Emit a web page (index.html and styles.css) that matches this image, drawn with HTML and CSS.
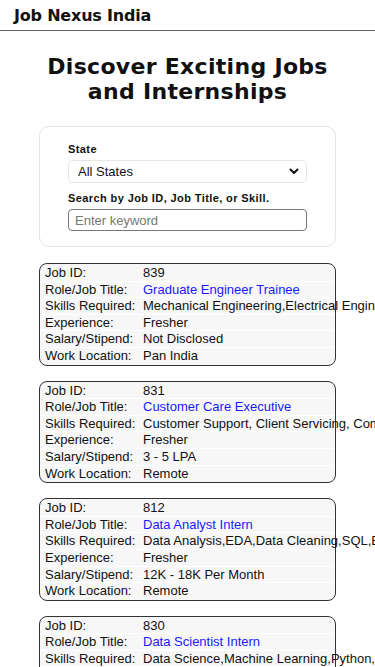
FILE: index.html
```html
<!DOCTYPE html>
<html lang="en">
<head>
  <meta charset="UTF-8" />
  <title>Job Nexus India</title>
  <meta name="viewport" content="width=device-width, initial-scale=1.0">
  <link rel="stylesheet" href="styles.css">
</head>
<body>
  <header class="topbar">
    <span class="brand">Job Nexus India</span>
  </header>

  <h1>Discover Exciting Jobs and Internships</h1>

  <div class="filters">
    <label for="state">State</label>
    <div class="select-wrap">
      <select id="state">
        <option>All States</option>
      </select>
      <svg class="chevron" width="10" height="7" viewBox="0 0 10 7">
        <path d="M1.5 1.5 L5 5 L8.5 1.5" fill="none" stroke="#111" stroke-width="2" stroke-linecap="round" stroke-linejoin="round"/>
      </svg>
    </div>
    <label for="keyword">Search by Job ID, Job Title, or Skill.</label>
    <input id="keyword" type="text" placeholder="Enter keyword">
  </div>

  <div class="jobs">
    <div class="job">
      <table>
        <tr><td>Job ID:</td><td>839</td></tr>
        <tr><td>Role/Job Title:</td><td><a href="#">Graduate Engineer Trainee</a></td></tr>
        <tr><td>Skills Required:</td><td>Mechanical Engineering,Electrical Engineering</td></tr>
        <tr><td>Experience:</td><td>Fresher</td></tr>
        <tr><td>Salary/Stipend:</td><td>Not Disclosed</td></tr>
        <tr><td>Work Location:</td><td>Pan India</td></tr>
      </table>
    </div>
    <div class="job">
      <table>
        <tr><td>Job ID:</td><td>831</td></tr>
        <tr><td>Role/Job Title:</td><td><a href="#">Customer Care Executive</a></td></tr>
        <tr><td>Skills Required:</td><td>Customer Support, Client Servicing, Communication</td></tr>
        <tr><td>Experience:</td><td>Fresher</td></tr>
        <tr><td>Salary/Stipend:</td><td>3 - 5 LPA</td></tr>
        <tr><td>Work Location:</td><td>Remote</td></tr>
      </table>
    </div>
    <div class="job">
      <table>
        <tr><td>Job ID:</td><td>812</td></tr>
        <tr><td>Role/Job Title:</td><td><a href="#">Data Analyst Intern</a></td></tr>
        <tr><td>Skills Required:</td><td>Data Analysis,EDA,Data Cleaning,SQL,Excel</td></tr>
        <tr><td>Experience:</td><td>Fresher</td></tr>
        <tr><td>Salary/Stipend:</td><td>12K - 18K Per Month</td></tr>
        <tr><td>Work Location:</td><td>Remote</td></tr>
      </table>
    </div>
    <div class="job">
      <table>
        <tr><td>Job ID:</td><td>830</td></tr>
        <tr><td>Role/Job Title:</td><td><a href="#">Data Scientist Intern</a></td></tr>
        <tr><td>Skills Required:</td><td>Data Science,Machine Learning,Python,SQL</td></tr>
        <tr><td>Experience:</td><td>Fresher</td></tr>
        <tr><td>Salary/Stipend:</td><td>10K - 15K Per Month</td></tr>
        <tr><td>Work Location:</td><td>Remote</td></tr>
      </table>
    </div>
  </div>
</body>
</html>
```

FILE: styles.css
```css
body {
  margin: 0;
  font-family: "Liberation Sans", Arial, sans-serif;
  background: #fff;
  color: #111;
  overflow-x: hidden;
}
.topbar {
  height: 30px;
  border-bottom: 1px solid #666;
  padding-left: 14px;
  display: flex;
  align-items: center;
}
.brand {
  font-family: "DejaVu Sans", sans-serif;
  font-weight: bold;
  font-size: 16px;
  letter-spacing: -0.2px;
}
h1 {
  font-family: "DejaVu Sans", sans-serif;
  font-size: 22px;
  letter-spacing: 0.3px;
  line-height: 25px;
  text-align: center;
  margin: 23px 36px 22px;
}
.filters {
  margin: 0 39px;
  border: 1px solid #e4e4e4;
  border-radius: 10px;
  padding: 16px 28px 15px;
  display: flex;
  flex-direction: column;
}
.filters label {
  font-size: 11px;
  font-weight: bold;
  letter-spacing: 0.4px;
  margin-bottom: 5px;
}
.select-wrap {
  position: relative;
  margin-bottom: 9px;
}
.filters select {
  appearance: none;
  -webkit-appearance: none;
  width: 100%;
  font-family: "Liberation Sans", Arial, sans-serif;
  font-size: 13px;
  height: 23px;
  border: 1px solid #e6e6e6;
  border-radius: 5px;
  background: #fff;
  padding: 0 9px;
  color: #111;
}
.chevron {
  position: absolute;
  right: 8px;
  top: 8px;
  pointer-events: none;
}
.filters input {
  font-family: "Liberation Sans", Arial, sans-serif;
  font-size: 13px;
  height: 22px;
  box-sizing: border-box;
  border: 1px solid #777;
  border-radius: 4px;
  padding: 0 6px;
}
.filters input::placeholder {
  color: #777;
}
.jobs {
  margin: 16px 39px 0;
}
.job {
  border: 1px solid #333;
  border-radius: 8px;
  background: #f7f7f7;
  margin-bottom: 15px;
  padding: 1px 0;
}
.job table {
  border-collapse: collapse;
  table-layout: fixed;
  width: 100%;
  font-size: 13px;
}
.job td {
  padding: 0 0 0 5px;
  height: 15.6px;
  line-height: 15.6px;
  white-space: nowrap;
  border-top: 1px solid #fff;
}
.job tr:first-child td {
  border-top: none;
}
.job td:first-child {
  width: 93px;
}
.job a {
  color: #1a1aff;
  text-decoration: none;
}
```
